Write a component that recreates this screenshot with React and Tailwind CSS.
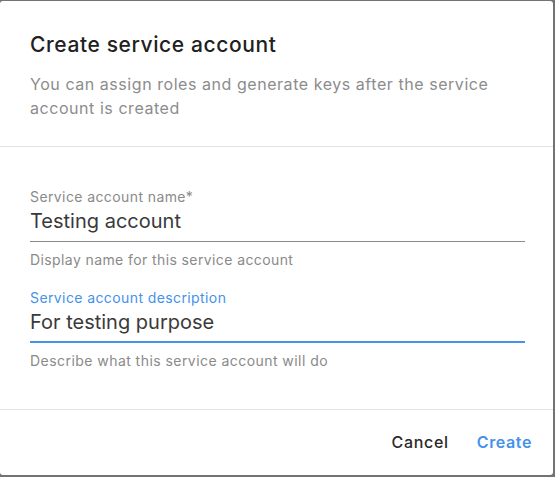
export default function App() {
  return (
    <div className="h-[477px] w-[555px] bg-[#737373] pt-px pr-[2px] pb-[2px]" style={{ fontFamily: 'Inter, "Noto Sans", sans-serif' }}>
      <div className="flex h-full flex-col rounded-[3px] bg-white">
        <div className="border-b border-[#e2e2e2] px-[30px] pt-[30px] pb-[26px]">
          <h1 className="text-[21px] leading-[28px] font-medium tracking-[0.6px] text-[#212121]">Create service account</h1>
          <p className="mt-[13px] text-[16px] leading-[24px] tracking-[0.55px] text-[#8c8c8c]">
            You can assign roles and generate keys after the service account is created
          </p>
        </div>

        <div className="flex-1 px-[30px] pt-[40px]">
          <div>
            <label className="block text-[14px] leading-[20px] tracking-[0.4px] text-[#8a8a8a]">Service account name*</label>
            <div className="w-[495px] border-b border-[#8a8a8a] pb-[6px] text-[20px] leading-[28px] text-[#3a3a3a]">
              Testing account
            </div>
            <p className="mt-[8px] text-[14px] leading-[20px] tracking-[0.4px] text-[#8a8a8a]">Display name for this service account</p>
          </div>

          <div className="mt-[18px]">
            <label className="block text-[14px] leading-[20px] tracking-[0.4px] text-[#4592ea]">Service account description</label>
            <div className="w-[495px] border-b-2 border-[#4592ea] pb-[5px] text-[20px] leading-[28px] text-[#3a3a3a]">
              For testing purpose
            </div>
            <p className="mt-[8px] text-[14px] leading-[20px] tracking-[0.45px] text-[#8a8a8a]">Describe what this service account will do</p>
          </div>
        </div>

        <div className="flex h-[66px] items-center justify-end gap-[12px] border-t border-[#e2e2e2] pr-[13px] pb-[2px]">
          <button className="px-2 text-[16px] leading-[24px] font-medium tracking-[0.7px] text-[#2a2a2a]">Cancel</button>
          <button className="px-2 text-[16px] leading-[24px] font-semibold tracking-[0.6px] text-[#4592ea]">Create</button>
        </div>
      </div>
    </div>
  )
}
